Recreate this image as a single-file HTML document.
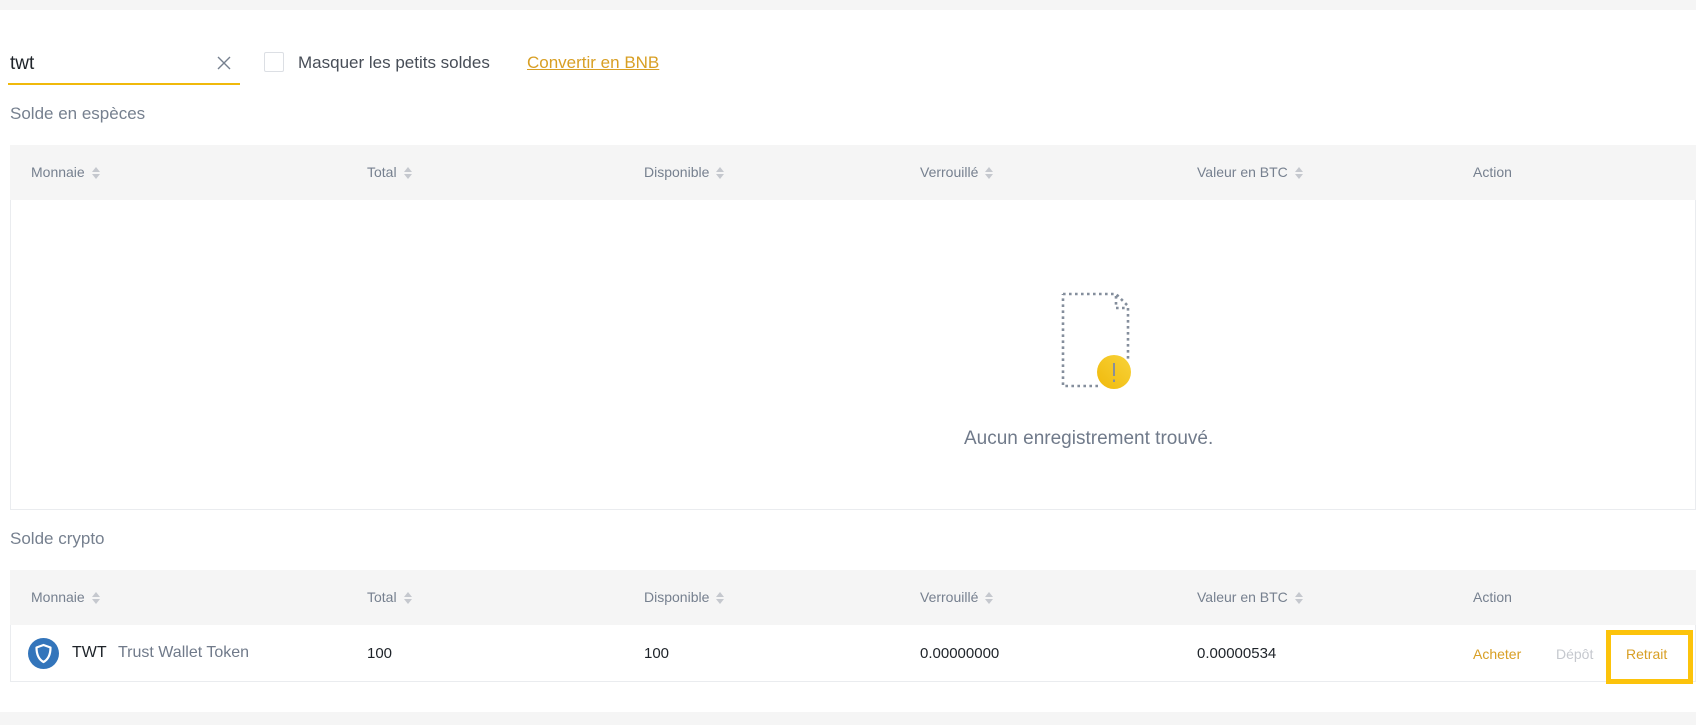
<!DOCTYPE html>
<html><head><meta charset="utf-8"><style>
*{box-sizing:border-box;margin:0;padding:0}
body{width:1696px;height:725px;overflow:hidden;background:#f5f5f5;font-family:"Liberation Sans",sans-serif;position:relative}
.panel{position:absolute;left:0;top:10px;width:1696px;height:702px;background:#fff}
.abs{position:absolute;white-space:nowrap}
.hdr{position:absolute;left:10px;width:1686px;height:55px;background:#f5f5f5}
.hdr span{position:absolute;top:19px;font-size:14px;color:#76808f}
.sort{display:inline-block;margin-left:7px;vertical-align:middle;width:8px;height:12px;position:relative}
.sort:before{content:"";position:absolute;left:0;top:0;border:4px solid transparent;border-bottom:5px solid #c5c8ce;border-top:0}
.sort:after{content:"";position:absolute;left:0;top:7px;border:4px solid transparent;border-top:5px solid #c5c8ce;border-bottom:0}
.cell{position:absolute;font-size:15px;color:#1e2329}
</style></head><body>
<div class="panel"></div>
<div class="abs" style="left:10px;top:53px;font-size:19px;color:#1e2329">twt</div>
<div class="abs" style="left:216px;top:55px;width:16px;height:16px">
<svg width="16" height="16" viewBox="0 0 16 16"><path d="M2 2L14 14M14 2L2 14" stroke="#76808f" stroke-width="1.4"/></svg></div>
<div class="abs" style="left:8px;top:83px;width:232px;height:2px;background:#f0b90b"></div>
<div class="abs" style="left:264px;top:52px;width:20px;height:20px;border:1px solid #dcdfe4;border-radius:2px"></div>
<div class="abs" style="left:298px;top:53px;font-size:17px;color:#474d57">Masquer les petits soldes</div>
<div class="abs" style="left:527px;top:53px;font-size:17px;color:#d89f24;text-decoration:underline">Convertir en BNB</div>
<div class="abs" style="left:10px;top:104px;font-size:17px;color:#76808f">Solde en espèces</div>

<div class="hdr" style="top:145px">
<span style="left:21px">Monnaie<i class="sort"></i></span>
<span style="left:357px">Total<i class="sort"></i></span>
<span style="left:634px">Disponible<i class="sort"></i></span>
<span style="left:910px">Verrouillé<i class="sort"></i></span>
<span style="left:1187px">Valeur en BTC<i class="sort"></i></span>
<span style="left:1463px">Action</span>
</div>
<div class="abs" style="left:10px;top:200px;width:1686px;height:310px;border:1px solid #eaecef;border-top:0"></div>
<svg class="abs" style="left:1060px;top:292px" width="74" height="100" viewBox="0 0 74 100">
<path d="M3 2H56L68 14V70M38 94H3V2" fill="none" stroke="#848e9c" stroke-width="2.6" stroke-dasharray="2.6 3.4"/>
<path d="M56 4V16H68" fill="none" stroke="#848e9c" stroke-width="2.6" stroke-dasharray="2.6 3.4"/>
<defs><linearGradient id="g" x1="0" y1="1" x2="1" y2="0"><stop offset="0" stop-color="#f0b90b"/><stop offset="1" stop-color="#f8d33a"/></linearGradient></defs>
<circle cx="54" cy="80" r="17" fill="url(#g)"/>
<path d="M54 71V84" stroke="#8a8f99" stroke-width="2"/>
<path d="M54 87.5V90" stroke="#8a8f99" stroke-width="2"/>
</svg>
<div class="abs" style="left:964px;top:428px;font-size:19px;color:#707a8a">Aucun enregistrement trouvé.</div>

<div class="abs" style="left:10px;top:529px;font-size:17px;color:#76808f">Solde crypto</div>
<div class="hdr" style="top:570px">
<span style="left:21px">Monnaie<i class="sort"></i></span>
<span style="left:357px">Total<i class="sort"></i></span>
<span style="left:634px">Disponible<i class="sort"></i></span>
<span style="left:910px">Verrouillé<i class="sort"></i></span>
<span style="left:1187px">Valeur en BTC<i class="sort"></i></span>
<span style="left:1463px">Action</span>
</div>
<div class="abs" style="left:10px;top:625px;width:1686px;height:57px;border:1px solid #eaecef;border-top:0"></div>
<svg class="abs" style="left:28px;top:638px" width="31" height="31" viewBox="0 0 31 31">
<circle cx="15.5" cy="15.5" r="15.5" fill="#3375bb"/>
<path d="M15.5 7L22.5 9.5C22.5 17 20 21.5 15.5 24C11 21.5 8.5 17 8.5 9.5Z" fill="none" stroke="#fff" stroke-width="2.2" stroke-linejoin="round"/>
</svg>
<div class="cell" style="left:72px;top:644px;font-size:16px">TWT</div>
<div class="cell" style="left:118px;top:644px;font-size:16px;color:#707a8a">Trust Wallet Token</div>
<div class="cell" style="left:367px;top:645px">100</div>
<div class="cell" style="left:644px;top:645px">100</div>
<div class="cell" style="left:920px;top:645px">0.00000000</div>
<div class="cell" style="left:1197px;top:645px">0.00000534</div>
<div class="cell" style="left:1473px;top:646px;font-size:14px;color:#d89f24">Acheter</div>
<div class="cell" style="left:1556px;top:646px;font-size:14px;color:#c5c8ce">Dépôt</div>
<div class="cell" style="left:1626px;top:646px;font-size:14px;color:#d89f24">Retrait</div>
<div class="abs" style="left:1606px;top:630px;width:87px;height:54px;border:5px solid #fcc30b"></div>
</body></html>
